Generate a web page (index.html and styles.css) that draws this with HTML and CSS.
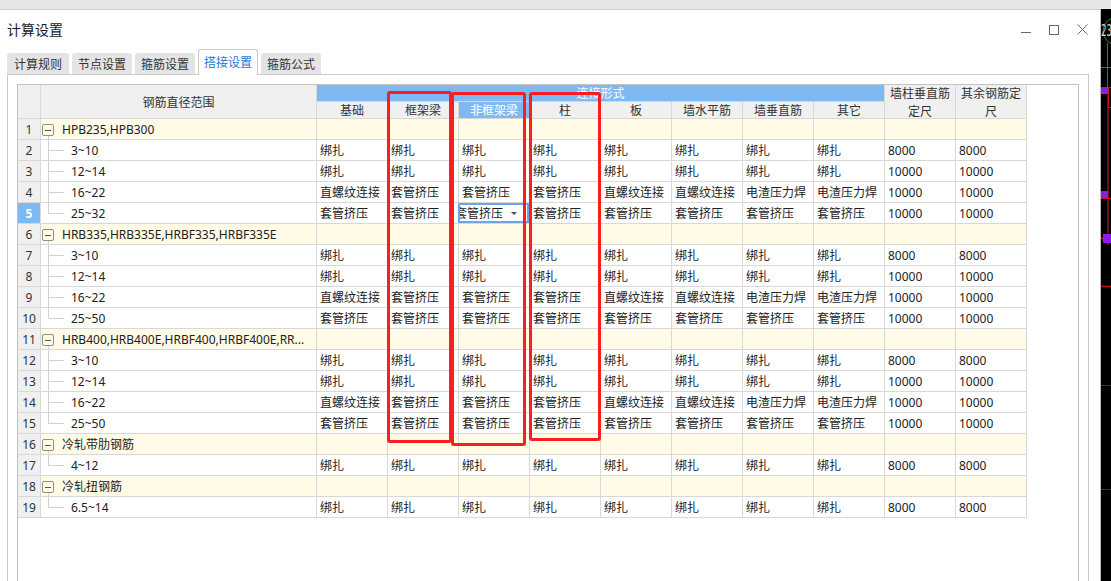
FILE: index.html
```html
<!DOCTYPE html>
<html lang="zh-CN">
<head>
<meta charset="utf-8">
<title>计算设置</title>
<link rel="stylesheet" href="styles.css">
</head>
<body>
<div class="desk">
  <div class="dialog">
    <div class="titlebar">
      <div class="title">计算设置</div>
      <div class="ctrls">
        <svg class="ico" width="10" height="10" viewBox="0 0 10 10"><path d="M0 7.5H10" stroke="#666" stroke-width="1"/></svg>
        <svg class="ico" width="10" height="10" viewBox="0 0 10 10"><rect x="0.5" y="0.5" width="9" height="9" fill="none" stroke="#666" stroke-width="1"/></svg>
        <svg class="ico" width="11" height="11" viewBox="0 0 11 11"><path d="M0.5 0.5L10.5 10.5M10.5 0.5L0.5 10.5" stroke="#666" stroke-width="1"/></svg>
      </div>
    </div>
    <div class="tabs">
      <div class="tab first">计算规则</div>
      <div class="tab">节点设置</div>
      <div class="tab">箍筋设置</div>
      <div class="tab active">搭接设置</div>
      <div class="tab">箍筋公式</div>
    </div>
    <div class="panel">
      <div class="gridbox">
        <div class="grid">
          <!-- header -->
          <div class="c h corner"></div>
          <div class="c h hname">钢筋直径范围</div>
          <div class="c h hband">连接形式</div>
          <div class="c h h2">基础</div>
          <div class="c h h2">框架梁</div>
          <div class="c h h2 hsel">非框架梁</div>
          <div class="c h h2">柱</div>
          <div class="c h h2">板</div>
          <div class="c h h2">墙水平筋</div>
          <div class="c h h2">墙垂直筋</div>
          <div class="c h h2">其它</div>
          <div class="c h htall hc11">墙柱垂直筋<br>定尺</div>
          <div class="c h htall hc12">其余钢筋定<br>尺</div>

          <!-- row 1 -->
          <div class="c rn">1</div><div class="c g gn"><span class="tg"></span>HPB235,HPB300</div>
          <div class="c g"></div><div class="c g"></div><div class="c g"></div><div class="c g"></div><div class="c g"></div><div class="c g"></div><div class="c g"></div><div class="c g"></div><div class="c g"></div><div class="c g"></div>
          <!-- row 2 -->
          <div class="c rn">2</div><div class="c nm">3~10</div>
          <div class="c">绑扎</div><div class="c">绑扎</div><div class="c">绑扎</div><div class="c">绑扎</div><div class="c">绑扎</div><div class="c">绑扎</div><div class="c">绑扎</div><div class="c">绑扎</div><div class="c">8000</div><div class="c">8000</div>
          <!-- row 3 -->
          <div class="c rn">3</div><div class="c nm">12~14</div>
          <div class="c">绑扎</div><div class="c">绑扎</div><div class="c">绑扎</div><div class="c">绑扎</div><div class="c">绑扎</div><div class="c">绑扎</div><div class="c">绑扎</div><div class="c">绑扎</div><div class="c">10000</div><div class="c">10000</div>
          <!-- row 4 -->
          <div class="c rn">4</div><div class="c nm">16~22</div>
          <div class="c">直螺纹连接</div><div class="c">套管挤压</div><div class="c">套管挤压</div><div class="c">套管挤压</div><div class="c">直螺纹连接</div><div class="c">直螺纹连接</div><div class="c">电渣压力焊</div><div class="c">电渣压力焊</div><div class="c">10000</div><div class="c">10000</div>
          <!-- row 5 -->
          <div class="c rn sel">5</div><div class="c nm last">25~32</div>
          <div class="c">套管挤压</div><div class="c">套管挤压</div>
          <div class="c ed"><div class="edbox"><span class="edtx">套管挤压</span><span class="dd"></span></div></div>
          <div class="c">套管挤压</div><div class="c">套管挤压</div><div class="c">套管挤压</div><div class="c">套管挤压</div><div class="c">套管挤压</div><div class="c">10000</div><div class="c">10000</div>

          <!-- row 6 -->
          <div class="c rn">6</div><div class="c g gn"><span class="tg"></span>HRB335,HRB335E,HRBF335,HRBF335E</div>
          <div class="c g"></div><div class="c g"></div><div class="c g"></div><div class="c g"></div><div class="c g"></div><div class="c g"></div><div class="c g"></div><div class="c g"></div><div class="c g"></div><div class="c g"></div>
          <!-- row 7 -->
          <div class="c rn">7</div><div class="c nm">3~10</div>
          <div class="c">绑扎</div><div class="c">绑扎</div><div class="c">绑扎</div><div class="c">绑扎</div><div class="c">绑扎</div><div class="c">绑扎</div><div class="c">绑扎</div><div class="c">绑扎</div><div class="c">8000</div><div class="c">8000</div>
          <!-- row 8 -->
          <div class="c rn">8</div><div class="c nm">12~14</div>
          <div class="c">绑扎</div><div class="c">绑扎</div><div class="c">绑扎</div><div class="c">绑扎</div><div class="c">绑扎</div><div class="c">绑扎</div><div class="c">绑扎</div><div class="c">绑扎</div><div class="c">10000</div><div class="c">10000</div>
          <!-- row 9 -->
          <div class="c rn">9</div><div class="c nm">16~22</div>
          <div class="c">直螺纹连接</div><div class="c">套管挤压</div><div class="c">套管挤压</div><div class="c">套管挤压</div><div class="c">直螺纹连接</div><div class="c">直螺纹连接</div><div class="c">电渣压力焊</div><div class="c">电渣压力焊</div><div class="c">10000</div><div class="c">10000</div>
          <!-- row 10 -->
          <div class="c rn">10</div><div class="c nm last">25~50</div>
          <div class="c">套管挤压</div><div class="c">套管挤压</div><div class="c">套管挤压</div><div class="c">套管挤压</div><div class="c">套管挤压</div><div class="c">套管挤压</div><div class="c">套管挤压</div><div class="c">套管挤压</div><div class="c">10000</div><div class="c">10000</div>

          <!-- row 11 -->
          <div class="c rn">11</div><div class="c g gn"><span class="tg"></span><span class="ell">HRB400,HRB400E,HRBF400,HRBF400E,RR...</span></div>
          <div class="c g"></div><div class="c g"></div><div class="c g"></div><div class="c g"></div><div class="c g"></div><div class="c g"></div><div class="c g"></div><div class="c g"></div><div class="c g"></div><div class="c g"></div>
          <!-- row 12 -->
          <div class="c rn">12</div><div class="c nm">3~10</div>
          <div class="c">绑扎</div><div class="c">绑扎</div><div class="c">绑扎</div><div class="c">绑扎</div><div class="c">绑扎</div><div class="c">绑扎</div><div class="c">绑扎</div><div class="c">绑扎</div><div class="c">8000</div><div class="c">8000</div>
          <!-- row 13 -->
          <div class="c rn">13</div><div class="c nm">12~14</div>
          <div class="c">绑扎</div><div class="c">绑扎</div><div class="c">绑扎</div><div class="c">绑扎</div><div class="c">绑扎</div><div class="c">绑扎</div><div class="c">绑扎</div><div class="c">绑扎</div><div class="c">10000</div><div class="c">10000</div>
          <!-- row 14 -->
          <div class="c rn">14</div><div class="c nm">16~22</div>
          <div class="c">直螺纹连接</div><div class="c">套管挤压</div><div class="c">套管挤压</div><div class="c">套管挤压</div><div class="c">直螺纹连接</div><div class="c">直螺纹连接</div><div class="c">电渣压力焊</div><div class="c">电渣压力焊</div><div class="c">10000</div><div class="c">10000</div>
          <!-- row 15 -->
          <div class="c rn">15</div><div class="c nm last">25~50</div>
          <div class="c">套管挤压</div><div class="c">套管挤压</div><div class="c">套管挤压</div><div class="c">套管挤压</div><div class="c">套管挤压</div><div class="c">套管挤压</div><div class="c">套管挤压</div><div class="c">套管挤压</div><div class="c">10000</div><div class="c">10000</div>

          <!-- row 16 -->
          <div class="c rn">16</div><div class="c g gn"><span class="tg"></span>冷轧带肋钢筋</div>
          <div class="c g"></div><div class="c g"></div><div class="c g"></div><div class="c g"></div><div class="c g"></div><div class="c g"></div><div class="c g"></div><div class="c g"></div><div class="c g"></div><div class="c g"></div>
          <!-- row 17 -->
          <div class="c rn">17</div><div class="c nm last">4~12</div>
          <div class="c">绑扎</div><div class="c">绑扎</div><div class="c">绑扎</div><div class="c">绑扎</div><div class="c">绑扎</div><div class="c">绑扎</div><div class="c">绑扎</div><div class="c">绑扎</div><div class="c">8000</div><div class="c">8000</div>

          <!-- row 18 -->
          <div class="c rn">18</div><div class="c g gn"><span class="tg"></span>冷轧扭钢筋</div>
          <div class="c g"></div><div class="c g"></div><div class="c g"></div><div class="c g"></div><div class="c g"></div><div class="c g"></div><div class="c g"></div><div class="c g"></div><div class="c g"></div><div class="c g"></div>
          <!-- row 19 -->
          <div class="c rn">19</div><div class="c nm last">6.5~14</div>
          <div class="c">绑扎</div><div class="c">绑扎</div><div class="c">绑扎</div><div class="c">绑扎</div><div class="c">绑扎</div><div class="c">绑扎</div><div class="c">绑扎</div><div class="c">绑扎</div><div class="c">8000</div><div class="c">8000</div>
        </div>
        <div class="mark m1"></div>
        <div class="mark m2"></div>
        <div class="mark m3"></div>
      </div>
    </div>
  </div>
  <div class="cad">
    <svg width="10" height="572" viewBox="0 0 10 572">
      <circle cx="16" cy="22" r="14" fill="none" stroke="#1c8c1c" stroke-width="1"/>
      <text x="0" y="27" fill="#d8d8d8" font-family="DejaVu Sans Mono, monospace" font-size="15" textLength="11" lengthAdjust="spacingAndGlyphs">23</text>
      <path d="M6.5 34V78" stroke="#1c8c1c" stroke-width="1"/>
      <path d="M0 58.5H10" stroke="#1c8c1c" stroke-width="1"/>
      <path d="M7 78V236" stroke="#e01818" stroke-width="1"/>
      <rect x="7.5" y="78.5" width="4" height="20" fill="none" stroke="#d01414" stroke-width="1"/>
      <path d="M0 78.5H10" stroke="#d01414" stroke-width="1"/>
      <path d="M0 189.5H10" stroke="#d01414" stroke-width="1"/>
      <path d="M0 229.5H10" stroke="#d01414" stroke-width="1.5"/>
      <path d="M0 277.5H10" stroke="#c01010" stroke-width="1.5"/>
      <path d="M0 376.5H10" stroke="#a00c0c" stroke-width="1"/>
      <path d="M0 480.5H10" stroke="#a00c0c" stroke-width="1"/>
      <rect x="0" y="78" width="7" height="7" fill="#8a1ee8"/>
      <rect x="0" y="182" width="7" height="7" fill="#8a1ee8"/>
      <rect x="2" y="225" width="8" height="9" fill="#8a1ee8"/>
    </svg>
  </div>
</div>
</body>
</html>
```

FILE: styles.css
```css
html, body {
  margin: 0;
  padding: 0;
}
body {
  width: 1111px;
  height: 581px;
  overflow: hidden;
  background: #e6e6e6;
  font-family: "Noto Sans", "Noto Sans CJK SC", sans-serif;
  color: #222;
}
.desk {
  display: flex;
  height: 572px;
  margin-top: 9px;
}
.dialog {
  box-sizing: border-box;
  width: 1101px;
  border-top: 1px solid #cdcdcd;
  border-right: 1px solid #bcbcbc;
  background: #fff;
  display: flex;
  flex-direction: column;
}
.cad {
  flex: 1;
  background: #000;
  overflow: hidden;
}
.cad svg {
  display: block;
}
.titlebar {
  height: 39px;
  flex: none;
  display: flex;
  align-items: center;
  padding: 0 12px 0 7px;
}
.title {
  font-size: 14px;
  line-height: 20px;
  color: #1a1a1a;
}
.ctrls {
  margin-left: auto;
  display: flex;
  align-items: center;
  gap: 18px;
}
.ico {
  display: block;
}
.tabs {
  flex: none;
  display: flex;
  align-items: flex-end;
  gap: 3px;
  height: 26px;
  padding-left: 7px;
  margin-bottom: -1px;
}
.tab {
  box-sizing: border-box;
  width: 60px;
  height: 21px;
  margin-bottom: 1px;
  padding-top: 1px;
  background: #e4e4e4;
  border-radius: 3px 3px 0 0;
  font-size: 12px;
  line-height: 21px;
  text-align: center;
  color: #333;
}
.tab.first {
  width: 62px;
}
.tab.active {
  height: 26px;
  margin-bottom: 0;
  background: #fff;
  border: 1px solid #c9c9c9;
  border-bottom: none;
  color: #1d78d6;
  line-height: 24px;
  position: relative;
  z-index: 1;
}
.panel {
  flex: 1;
  margin: 0 11px 0 7px;
  border: 1px solid #cbcbcb;
  border-bottom: none;
  padding: 9px 9px 0;
  display: flex;
  flex-direction: column;
}
.gridbox {
  flex: 1;
  border: 1px solid #c3c3c3;
  border-bottom: none;
  position: relative;
}
.grid {
  display: grid;
  grid-template-columns: 23px 276px repeat(10, 71px);
  grid-template-rows: 17px 17px;
  grid-auto-rows: 21px;
  width: 1009px;
}
.c {
  box-sizing: border-box;
  border-right: 1px solid #d8d8d8;
  border-bottom: 1px solid #d8d8d8;
  font-size: 12px;
  line-height: 20px;
  display: flex;
  align-items: center;
  padding-left: 3px;
  padding-top: 2px;
  white-space: nowrap;
  overflow: hidden;
  min-width: 0;
}
.h {
  background: #f0f0f0;
  justify-content: center;
  text-align: center;
  padding: 2px 0 0;
  color: #333;
  line-height: 16px;
}
.corner {
  grid-row: 1 / 3;
  grid-column: 1;
}
.hname {
  grid-row: 1 / 3;
  grid-column: 2;
}
.hband {
  grid-row: 1;
  grid-column: 3 / 11;
  background: #7fb9f4;
  color: #fff;
}
.h2 {
  grid-row: 2;
}
.hsel {
  background: #7fb9f4;
  color: #fff;
}
.htall {
  grid-row: 1 / 3;
  white-space: normal;
  line-height: 18px;
  padding-top: 3px;
}
.hc11 {
  grid-column: 11;
}
.hc12 {
  grid-column: 12;
}
.rn {
  background: #f0f0f0;
  justify-content: center;
  padding-left: 0;
  color: #333;
}
.rn.sel {
  background: #7fb9f4;
  color: #fff;
  font-weight: bold;
}
.g {
  background-color: #fffbe6;
}
.gn {
  padding-left: 1px;
  padding-right: 6px;
  background-image: linear-gradient(#d2d2d2, #d2d2d2);
  background-position: 7px 100%;
  background-size: 1px 5px;
  background-repeat: no-repeat;
}
.ell {
  overflow: hidden;
  text-overflow: ellipsis;
}
.tg {
  flex: none;
  box-sizing: border-box;
  width: 12px;
  height: 12px;
  margin-right: 8px;
  border: 1px solid #8f8f8f;
  border-radius: 2px;
  background: #fffbe6;
  display: flex;
  align-items: center;
  justify-content: center;
}
.tg::before {
  content: "";
  width: 6px;
  height: 1px;
  background: #555;
}
.nm {
  padding-left: 30px;
  background-image: linear-gradient(#d2d2d2, #d2d2d2), linear-gradient(#d2d2d2, #d2d2d2);
  background-position: 7px 0, 7px 50%;
  background-size: 1px 100%, 16px 1px;
  background-repeat: no-repeat;
  background-origin: border-box;
}
.nm.last {
  background-size: 1px 50%, 16px 1px;
}
.ed {
  padding: 0;
  overflow: visible;
  align-items: flex-start;
}
.edbox {
  box-sizing: border-box;
  flex: none;
  width: 71px;
  height: 20px;
  margin-left: -1px;
  border: 2px solid #6aa7ea;
  background: #fff;
  display: flex;
  align-items: center;
  overflow: hidden;
}
.edtx {
  flex: none;
  margin-left: -5px;
  padding-top: 1px;
  line-height: 16px;
}
.dd {
  flex: none;
  width: 0;
  height: 0;
  margin-left: auto;
  margin-right: 10px;
  border-left: 3px solid transparent;
  border-right: 3px solid transparent;
  border-top: 3px solid #555;
}
.mark {
  position: absolute;
  box-sizing: border-box;
  border: 3px solid #fa1e1e;
  border-radius: 3px;
  z-index: 2;
}
.m1 {
  left: 369px;
  top: 6px;
  width: 65px;
  height: 352px;
}
.m2 {
  left: 433px;
  top: 7px;
  width: 75px;
  height: 354px;
}
.m3 {
  left: 511px;
  top: 7px;
  width: 72px;
  height: 349px;
}
```
